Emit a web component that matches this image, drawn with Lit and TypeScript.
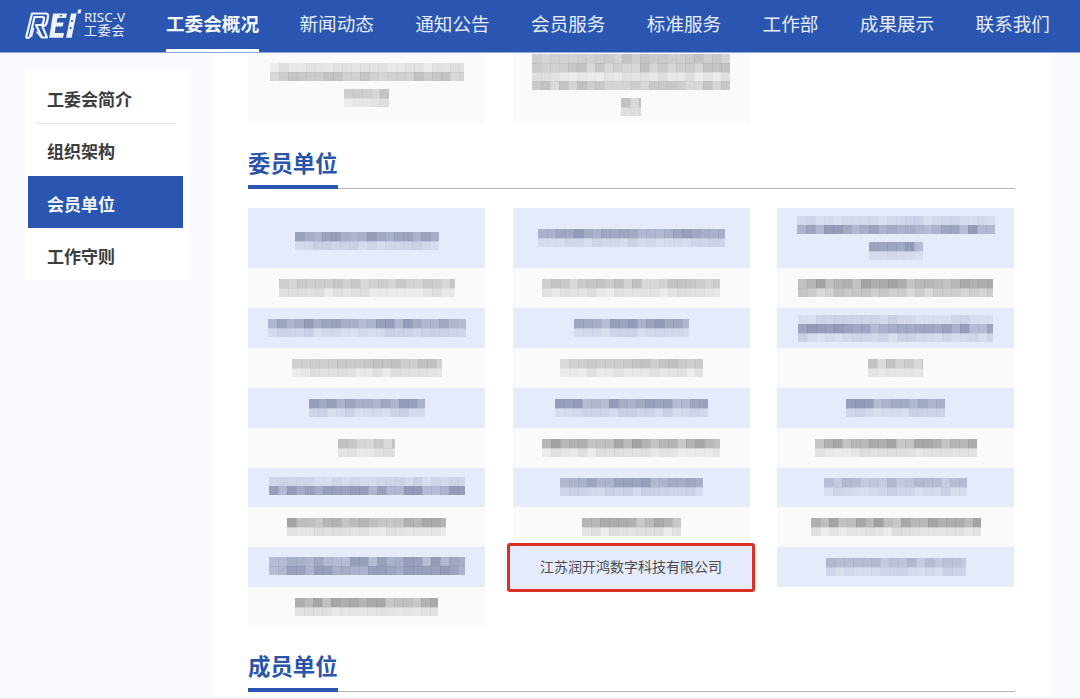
import { LitElement, html, css, svg } from "lit";
import { customElement } from "lit/decorators.js";

type Line = [number, string];
interface Cell { lines?: Line[]; text?: string; dy?: number; }

const NAV = ["新闻动态", "通知公告", "会员服务", "标准服务", "工作部", "成果展示", "联系我们"];

const TOP: Cell[] = [
  { lines: [[194, "lm"], [45, "ml"]] },
  { lines: [[198, "mmlm"], [20, "ml"]] },
  {},
];

const GRID: Cell[][] = [
  [
    { lines: [[144, "dl"]], dy: 6 }, { lines: [[176, "ml"]] }, { lines: [[198, "dl"]] }, { lines: [[150, "ml"]] },
    { lines: [[116, "dl"]] }, { lines: [[57, "ml"]] }, { lines: [[196, "ld"]], dy: -2 }, { lines: [[159, "dl"]] },
    { lines: [[196, "dd"]], dy: -2 }, { lines: [[143, "dl"]] },
  ],
  [
    { lines: [[187, "dl"]] }, { lines: [[178, "ml"]] }, { lines: [[115, "dl"]] }, { lines: [[143, "ml"]] },
    { lines: [[153, "dl"]] }, { lines: [[178, "dl"]] }, { lines: [[143, "dl"]] }, { lines: [[99, "dl"]] },
    { text: "江苏润开鸿数字科技有限公司", dy: 5 },
  ],
  [
    { lines: [[198, "ld"], [54, "dl"]] }, { lines: [[195, "dm"]] }, { lines: [[195, "ldl"]] }, { lines: [[55, "ml"]] },
    { lines: [[99, "dl"]] }, { lines: [[162, "dl"]] }, { lines: [[143, "ml"]] }, { lines: [[170, "dl"]] },
    { lines: [[140, "ml"]] },
  ],
];

const TILE = 9;
let seed = 7;
const rand = () => {
  seed = (seed * 16807) % 2147483647;
  return seed / 2147483647;
};
const ALPHA: Record<string, [number, number]> = { d: [0.38, 0.3], m: [0.24, 0.2], l: [0.1, 0.12] };

function mosaic(line: Line, tint: string) {
  const [w, rows] = line;
  const cols = Math.ceil(w / TILE);
  const rects = [];
  for (let r = 0; r < rows.length; r++) {
    const [base, spread] = ALPHA[rows[r]];
    for (let c = 0; c < cols; c++) {
      const a = (base + rand() * spread).toFixed(2);
      rects.push(svg`<rect x=${c * TILE} y=${r * TILE} width=${TILE + 0.3} height=${TILE + 0.3} fill=${tint} opacity=${a}></rect>`);
    }
  }
  const h = rows.length * TILE;
  return html`<svg class="mosaic" width=${w} height=${h} viewBox="0 0 ${w} ${h}">${rects}</svg>`;
}

@customElement("app-root")
export class AppRoot extends LitElement {
  static styles = css`
    :host {
      display: block;
      height: 699px;
      overflow: hidden;
      background: #f8fafe;
      font-family: "Noto Sans CJK SC", "Noto Sans", sans-serif;
    }
    .page { display: flex; flex-direction: column; height: 699px; }
    .bar {
      flex: none;
      position: relative;
      z-index: 2;
      height: 52px;
      background: #2a56b2;
      box-shadow: 0 1px 0 #8fa9dc;
      display: flex;
      align-items: stretch;
      padding-left: 24px;
      color: #e6edf8;
    }
    .brand { display: flex; align-items: center; width: 142px; flex: none; padding-bottom: 5px; box-sizing: border-box; }
    .brand svg { display: block; flex: none; }
    .brand-text { margin-left: 0; display: flex; flex-direction: column; color: #e9eff9; }
    .brand-text b { font: 400 13.4px/12px "Noto Sans", sans-serif; }
    .brand-text i { font: 400 13px/14px "Noto Sans CJK SC", sans-serif; letter-spacing: 0.7px; }
    nav { display: flex; gap: 41.4px; font-size: 18.6px; line-height: 46px; }
    nav a { display: block; white-space: nowrap; height: 52px; box-sizing: border-box; }
    nav a.on {
      font-weight: 700;
      color: #f4f7fc;
      border-bottom: 3.5px solid #fff;
      margin-right: -0.9px;
    }
    .body { flex: 1; min-height: 0; display: flex; overflow: hidden; }
    .side { flex: none; width: 212px; padding: 18px 0 0 25px; box-sizing: border-box; }
    .menu {
      width: 164px;
      background: #fff;
      padding: 1px 6px 0 3px;
      box-sizing: border-box;
      height: 210px;
    }
    .item {
      height: 52.3px;
      padding-left: 19px;
      font-size: 17px;
      font-weight: 700;
      line-height: 56px;
      color: #3c3c3c;
      overflow: hidden;
    }
    .item.on { background: #2a56b2; color: #f2f5fb; }
    .rule { height: 1px; margin: 0 7px -1px 8px; background: #e6e6e6; }
    main {
      flex: none;
      width: 840px;
      background: #fff;
      padding-left: 36px;
      box-sizing: border-box;
    }
    .wrap { width: 767px; }
    .grid {
      display: grid;
      grid-template-columns: repeat(3, 237px);
      column-gap: 27.5px;
      justify-content: start;
    }
    .cols { align-items: start; }
    .col { display: grid; grid-template-rows: 60.3px; grid-auto-rows: 39.85px; }
    .toprow { height: 71.5px; }
    .cell {
      position: relative;
      display: flex;
      flex-direction: column;
      align-items: center;
      justify-content: center;
      gap: 8px;
      box-sizing: border-box;
      background: #fafafa;
      font-size: 14px;
      color: #4c4c4c;
      white-space: nowrap;
    }
    .toprow .cell { padding-bottom: 6px; }
    .toprow .cell.none { background: none; }
    .cell.blue { background: #e5ebfa; }
    .cell.marked { z-index: 1; }
    .mark {
      position: absolute;
      z-index: -1;
      top: -4.5px;
      bottom: -4.5px;
      left: -6px;
      right: -5.5px;
      background: #e5ebfa;
      border: 3px solid #dc2f23;
      border-radius: 3px;
      pointer-events: none;
    }
    .mosaic { display: block; filter: blur(0.5px); flex: none; }
    .head {
      height: 39px;
      box-sizing: border-box;
      border-bottom: 1px solid #b4b4b8;
      display: flex;
      align-items: flex-start;
    }
    .head span {
      display: block;
      height: 39px;
      box-sizing: border-box;
      border-bottom: 4px solid #2a56b2;
      font-size: 22.4px;
      font-weight: 700;
      line-height: 25px;
      color: #2b55a8;
    }
    .h1 { margin: 26.5px 0 19px; }
    .h2 { margin-top: 26.5px; }
    .foot { flex: none; height: 2px; background: #eff0f3; }
  `;

  private logo() {
    return html`<svg width="60" height="34" viewBox="0 0 60 34" fill="none" stroke="#eef3fb" stroke-linejoin="round" stroke-linecap="round" aria-label="RISC-V logo">
      <path stroke-width="2.2" d="M8 6.5H21.5Q24.8 6.5 24 10L22.8 15.5Q22 19 18.5 19.6L23 30.5H18L12 18H16.5Q18.8 18 19.2 16L20 11.5Q20.3 10 18.5 10H10.5L6 29.5Q5.7 30.8 4 30.8H3.4Q2 30.8 2.4 29.2Z"></path>
      <path stroke-width="1.6" d="M9.5 21.5L7.6 29M13 25L17 30"></path>
      <path fill="#eef3fb" stroke="none" d="M29 6.5H43L42 11H33.6L32.6 15.5H39.6L38.6 19.5H31.7L30.8 26H40L39 30.8H25.2Z"></path>
      <path fill="#2a56b2" stroke="none" d="M33 22H35.5L35 24H32.6ZM37 22H38.5L38.2 24H36.7ZM36 8H38L37.7 9.6H35.7Z"></path>
      <path fill="#eef3fb" stroke="none" d="M47 6.5H52.6L47.6 30.8H42Z"></path>
      <path fill="#2a56b2" stroke="none" d="M47.4 13H49L48.6 15H47ZM46 20H47.6L47.2 22H45.6Z"></path>
      <path fill="#eef3fb" stroke="none" d="M54.2 2.6H57.4L56.6 6.4H53.4Z"></path>
    </svg>`;
  }

  private cell(c: Cell, blue: boolean) {
    const tint = blue ? "#6b7296" : "#77777a";
    const shift = c.dy ? (c.dy > 0 ? `padding-top:${c.dy}px` : `padding-bottom:${-c.dy}px`) : "";
    return html`<div class="cell ${blue ? "blue" : ""} ${!c.lines && !c.text ? "none" : ""} ${c.text ? "marked" : ""}" style=${shift}>
      ${c.lines?.map((l) => mosaic(l, tint))}
      ${c.text ? html`${c.text}<div class="mark"></div>` : ""}
    </div>`;
  }

  render() {
    seed = 7;
    return html`<div class="page">
      <header class="bar">
        <div class="brand">
          ${this.logo()}
          <div class="brand-text"><b>RISC-V</b><i>工委会</i></div>
        </div>
        <nav>
          <a class="on">工委会概况</a>
          ${NAV.map((n) => html`<a>${n}</a>`)}
        </nav>
      </header>
      <div class="body">
        <aside class="side">
          <div class="menu">
            <div class="item">工委会简介</div>
            <div class="rule"></div>
            <div class="item">组织架构</div>
            <div class="item on">会员单位</div>
            <div class="item">工作守则</div>
          </div>
        </aside>
        <main>
          <div class="wrap">
            <div class="grid toprow">${TOP.map((c) => this.cell(c, false))}</div>
            <div class="head h1"><span>委员单位</span></div>
            <div class="grid cols">
              ${GRID.map(
                (col) => html`<div class="col">${col.map((c, i) => this.cell(c, i % 2 === 0))}</div>`
              )}
            </div>
            <div class="head h2"><span>成员单位</span></div>
          </div>
        </main>
      </div>
      <div class="foot"></div>
    </div>`;
  }
}
